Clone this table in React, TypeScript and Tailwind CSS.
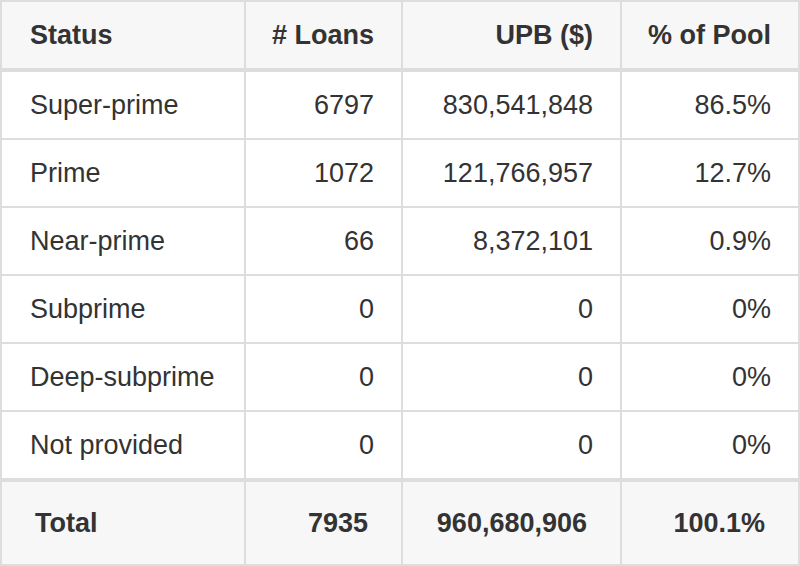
import React from "react";

const rows = [
  ["Super-prime", "6797", "830,541,848", "86.5%"],
  ["Prime", "1072", "121,766,957", "12.7%"],
  ["Near-prime", "66", "8,372,101", "0.9%"],
  ["Subprime", "0", "0", "0%"],
  ["Deep-subprime", "0", "0", "0%"],
  ["Not provided", "0", "0", "0%"],
];

export default function App() {
  return (
    <div
      className="w-[800px] h-[566px] bg-white text-[#333333] text-[27px] whitespace-nowrap"
      style={{ fontFamily: '"Liberation Sans", Arial, sans-serif' }}
    >
      <div className="grid grid-cols-[244px_157px_219px_178px] border-l-2 border-t-2 border-[#dddddd]">
        <div className="h-[70px] flex items-center px-[28px] font-bold bg-[#f7f7f7] border-r-2 border-b-4 border-[#dddddd]">Status</div>
        <div className="h-[70px] flex items-center justify-end px-[27px] font-bold bg-[#f7f7f7] border-r-2 border-b-4 border-[#dddddd]"><span className="shrink-0"># Loans</span></div>
        <div className="h-[70px] flex items-center justify-end px-[27px] font-bold bg-[#f7f7f7] border-r-2 border-b-4 border-[#dddddd]"><span className="shrink-0">UPB ($)</span></div>
        <div className="h-[70px] flex items-center justify-end px-[27px] font-bold bg-[#f7f7f7] border-r-2 border-b-4 border-[#dddddd]"><span className="shrink-0">% of Pool</span></div>
        {rows.map((r, i) => (
          <React.Fragment key={i}>
            <div className="h-[68px] flex items-center px-[28px] border-r-2 border-b-2 border-[#dddddd]">{r[0]}</div>
            <div className="h-[68px] flex items-center justify-end px-[27px] border-r-2 border-b-2 border-[#dddddd]">{r[1]}</div>
            <div className="h-[68px] flex items-center justify-end px-[27px] border-r-2 border-b-2 border-[#dddddd]">{r[2]}</div>
            <div className="h-[68px] flex items-center justify-end px-[27px] border-r-2 border-b-2 border-[#dddddd]">{r[3]}</div>
          </React.Fragment>
        ))}
        <div className="h-[86px] flex items-center px-[33px] font-bold bg-[#f7f7f7] border-t-2 border-r-2 border-b-2 border-[#dddddd]">Total</div>
        <div className="h-[86px] flex items-center justify-end px-[33px] font-bold bg-[#f7f7f7] border-t-2 border-r-2 border-b-2 border-[#dddddd]">7935</div>
        <div className="h-[86px] flex items-center justify-end px-[33px] font-bold bg-[#f7f7f7] border-t-2 border-r-2 border-b-2 border-[#dddddd]">960,680,906</div>
        <div className="h-[86px] flex items-center justify-end px-[33px] font-bold bg-[#f7f7f7] border-t-2 border-r-2 border-b-2 border-[#dddddd]">100.1%</div>
      </div>
    </div>
  );
}
